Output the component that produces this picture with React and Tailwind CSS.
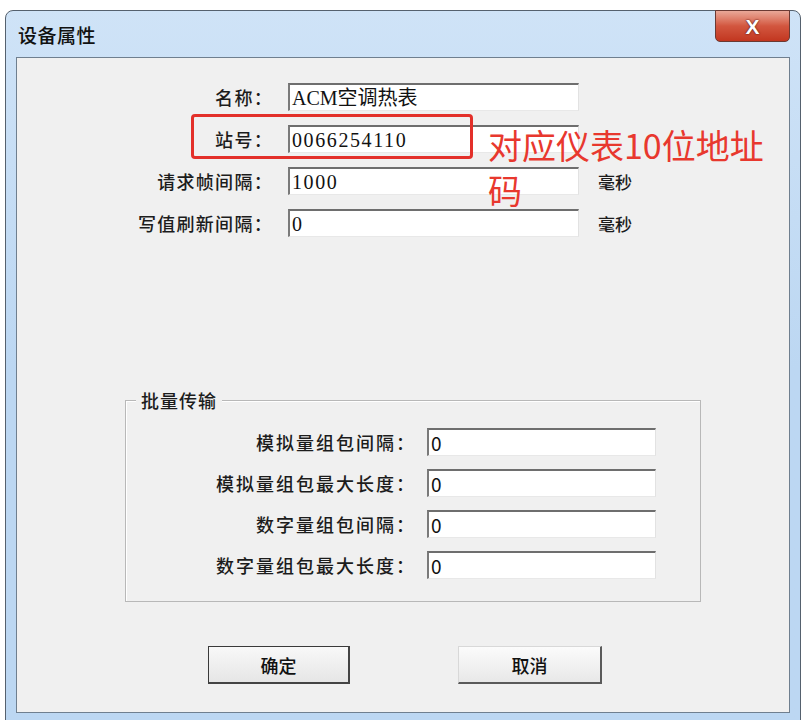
import React from 'react';

const cjk = '"Noto Sans CJK SC", "Noto Sans", sans-serif';
const serif = '"Liberation Serif", "Noto Sans CJK SC", serif';

const Field = ({ value, width, serifText, tight }) => (
  <div
    className={`h-[28px] bg-white border-t-2 border-l-2 border-t-[#6e6e6e] border-l-[#7a7a7a] border-r border-b border-r-[#e2e2e2] border-b-[#e8e8e8] flex items-center pl-[2px] text-[#111] overflow-hidden whitespace-nowrap ${width}`}
    style={{ fontFamily: serifText ? serif : cjk }}
  >
    <span
      className={
        serifText
          ? tight
            ? 'text-[20px] leading-none'
            : 'text-[20px] tracking-[1.6px] leading-none'
          : 'text-[19px] leading-none'
      }
    >
      {value}
    </span>
  </div>
);

const topRows = [
  { label: '名称：', value: 'ACM空调热表', unit: '', tight: true },
  { label: '站号：', value: '0066254110', unit: '' },
  { label: '请求帧间隔：', value: '1000', unit: '毫秒' },
  { label: '写值刷新间隔：', value: '0', unit: '毫秒' },
];

const batchRows = [
  { label: '模拟量组包间隔：', value: '0' },
  { label: '模拟量组包最大长度：', value: '0' },
  { label: '数字量组包间隔：', value: '0' },
  { label: '数字量组包最大长度：', value: '0' },
];

export default function App() {
  return (
    <div className="w-[806px] h-[720px] bg-white overflow-hidden" style={{ fontFamily: cjk }}>
      <div className="ml-[5px] mt-[10px] w-[796px] h-[716px] rounded-t-[8px] border border-[#55616e] bg-gradient-to-b from-[#cfe3f7] via-[#bcd7f2] to-[#bcd7f2] flex flex-col px-[10px]">
        {/* title bar */}
        <div className="h-[46px] flex items-start justify-between shrink-0">
          <div className="mt-[12px] ml-[2px] text-[19px] leading-[24px] font-medium text-[#111] tracking-[0.5px]">设备属性</div>
          <div className="w-[75px] h-[32px] -mt-px rounded-b-[5px] border border-[#6b3a33] bg-gradient-to-b from-[#e9a898] via-[#d2563f] to-[#c2361f] flex items-center justify-center">
            <span className="text-white text-[21px] font-bold leading-none [text-shadow:0_0_2px_#5a1a10,0_0_1px_#5a1a10]" style={{ fontFamily: '"Liberation Sans", sans-serif' }}>X</span>
          </div>
        </div>

        {/* client area */}
        <div className="relative h-[656px] border border-[#6f7f8f] bg-[#f0f0f0] shrink-0">
          <div className="pt-[25px] flex flex-col gap-[14px]">
            {topRows.map((r) => (
              <div key={r.label} className="flex items-center h-[28px]">
                <div className="w-[256px] text-right text-[18px] font-medium tracking-[1.3px] text-[#1c1c1c] leading-none">{r.label}</div>
                <div className="ml-[15px]">
                  <Field value={r.value} width="w-[291px]" serifText tight={r.tight} />
                </div>
                {r.unit && <div className="ml-[19px] text-[17px] font-medium text-[#1c1c1c] leading-none">{r.unit}</div>}
              </div>
            ))}
          </div>

          {/* annotation */}
          <div className="absolute left-[174px] top-[56px] w-[282px] h-[45px] border-[3px] border-[#e3302a] rounded-[4px]" />
          <div className="absolute left-[471px] top-[67px] h-[40px] text-[34px] leading-[40px] text-[#e8382e] whitespace-nowrap">对应仪表10位地址</div>
          <div className="absolute left-[471px] top-[112px] h-[40px] text-[34px] leading-[40px] text-[#e8382e]">码</div>

          {/* batch group */}
          <div className="relative ml-[108px] mt-[163px] w-[576px] h-[202px] border border-[#b8b8b8] shadow-[inset_1px_1px_0_#fff]">
            <div className="absolute -top-[12px] left-[10px] px-[5px] bg-[#f0f0f0] text-[18px] leading-[22px] font-medium text-[#1c1c1c] tracking-[1px]">批量传输</div>
            <div className="pt-[27px] flex flex-col gap-[13px]">
              {batchRows.map((r) => (
                <div key={r.label} className="flex items-center h-[28px]">
                  <div className="w-[290px] text-right text-[18px] font-medium tracking-[2px] text-[#1c1c1c] leading-none">{r.label}</div>
                  <div className="ml-[11px]">
                    <Field value={r.value} width="w-[229px]" />
                  </div>
                </div>
              ))}
            </div>
          </div>

          {/* buttons */}
          <div className="flex mt-[44px] ml-[191px] gap-[108px]">
            <button className="w-[142px] h-[38px] border border-[#3a3a3a] border-r-2 border-b-2 border-r-[#444] border-b-[#444] bg-gradient-to-b from-[#f8f8f8] to-[#e6e6e6] text-[18px] font-medium text-[#111] leading-none">确定</button>
            <button className="w-[144px] h-[38px] border border-[#d8d8d8] border-r-2 border-b-2 border-r-[#5a5a5a] border-b-[#5a5a5a] bg-gradient-to-b from-[#fbfbfb] to-[#e8e8e8] text-[18px] font-medium text-[#111] leading-none">取消</button>
          </div>
        </div>
      </div>
    </div>
  );
}
